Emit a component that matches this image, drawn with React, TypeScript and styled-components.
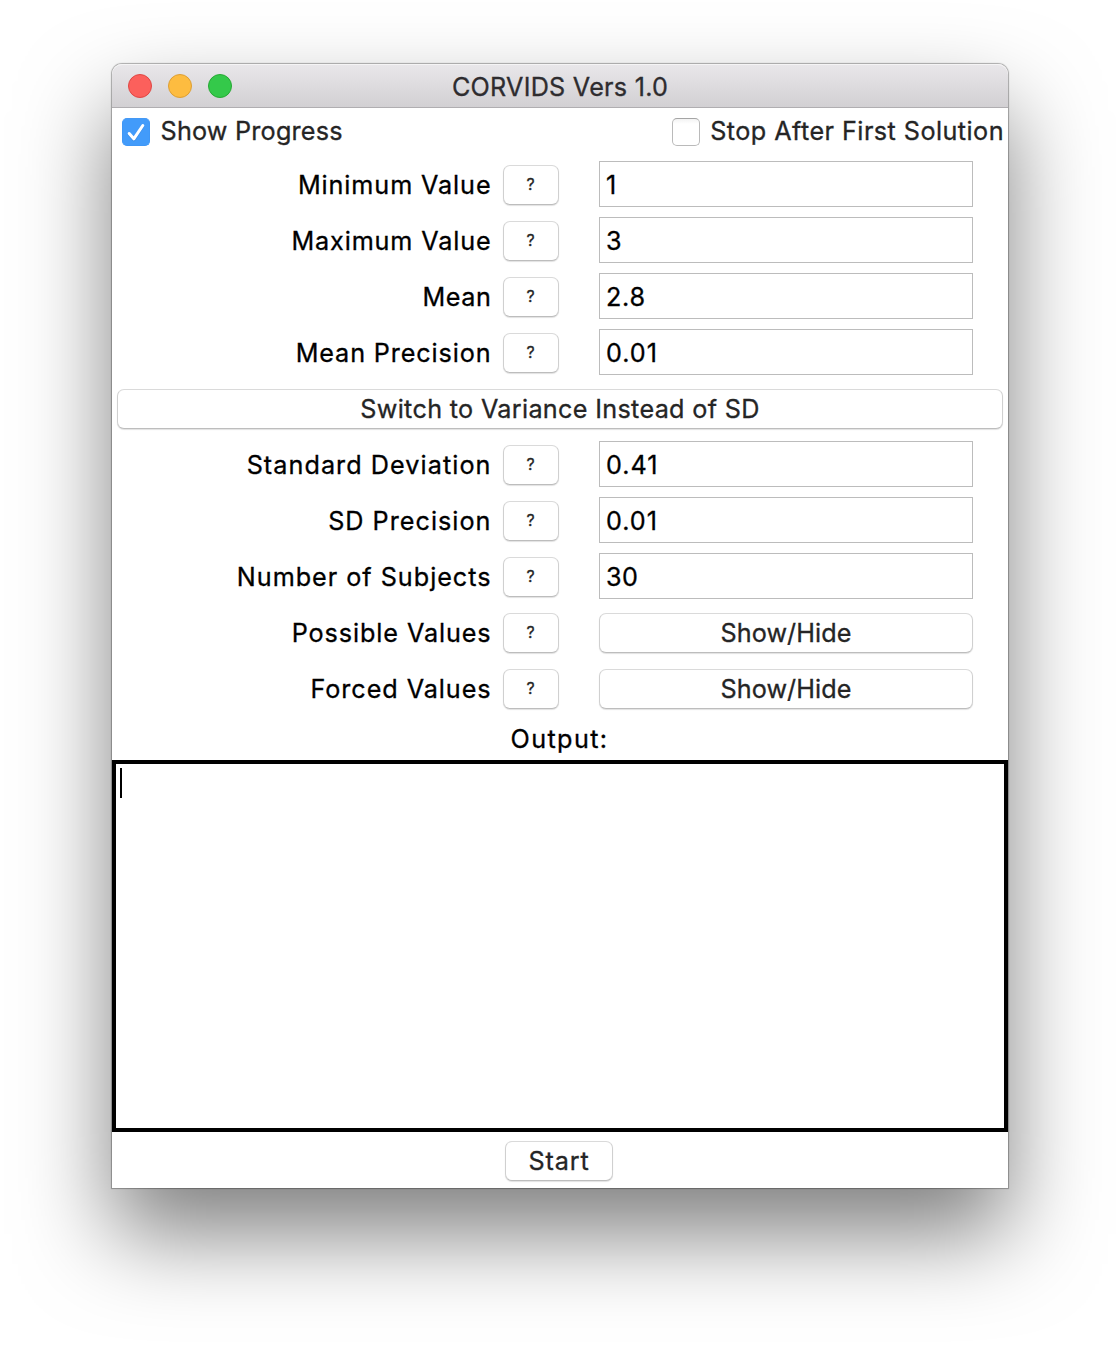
import React from 'react';
import styled, { createGlobalStyle } from 'styled-components';

const GlobalStyle = createGlobalStyle`
  * { box-sizing: border-box; }
  body { margin: 0; background: #fff; }
`;

const Desktop = styled.main`
  height: 1348px;
  padding: 64px 112px;
  overflow: hidden;
  background: #fff;
  font: 400 25.2px/30px Inter, "Liberation Sans", sans-serif;
  color: #000;
  -webkit-text-stroke: 0.3px;
`;

const Window = styled.section`
  display: flex;
  flex-direction: column;
  height: 1124px;
  background: #fff;
  border-radius: 10px 10px 0 0;
  box-shadow: 0 0 1px 1px rgba(0, 0, 0, 0.3), 0 46px 90px rgba(0, 0, 0, 0.5);
`;

const TitleBar = styled.header`
  display: grid;
  grid-template-columns: 1fr auto 1fr;
  align-items: center;
  height: 44px;
  padding: 0 16px;
  background: linear-gradient(#e9e7ea, #d2d0d3);
  border-bottom: 1px solid #b0aeb1;
  border-radius: 10px 10px 0 0;
  box-shadow: inset 0 1px 0 #f5f4f5;
`;

const Lights = styled.div`
  display: flex;
  gap: 16px;
  padding-top: 1px;
`;

const Light = styled.span<{ $fill: string; $rim: string }>`
  width: 24px;
  height: 24px;
  border-radius: 50%;
  background: ${(p) => p.$fill};
  border: 1px solid ${(p) => p.$rim};
`;

const Text = styled.span<{ $track?: number }>`
  white-space: pre;
  letter-spacing: ${(p) => p.$track ?? 0}px;
`;

const Title = styled(Text)`
  padding-top: 2px;
  color: #2e2c2f;
`;

const Options = styled.div`
  display: flex;
  justify-content: space-between;
  height: 48px;
  padding: 8px 4px 0 10px;
  color: #252525;
`;

const Option = styled.label`
  display: flex;
  gap: 10.5px;
`;

const Box = styled.span<{ $on?: boolean }>`
  display: flex;
  width: 28px;
  height: 28px;
  margin-top: 2px;
  border-radius: 5px;
  border: 1px solid ${(p) => (p.$on ? '#3f97f6' : '#bababa')};
  border-top-color: ${(p) => (p.$on ? '#4599f5' : '#a5a5a5')};
  background: ${(p) => (p.$on ? '#429bfa' : 'linear-gradient(#f3f3f3, #fff 5px)')};
`;

const Row = styled.div`
  display: grid;
  grid-template-columns: 379.5px 56px 374px;
  column-gap: 11.5px;
  align-items: center;
  height: 56px;

  > :last-child { margin-left: 28.5px; width: 374px; }
`;

const Label = styled(Text)`
  padding-top: 2px;
  text-align: right;
`;

const Button = styled.button`
  display: flex;
  align-items: center;
  justify-content: center;
  width: 100%;
  height: 40px;
  margin: 2px 0 0;
  padding: 0;
  font: inherit;
  color: #252525;
  background: #fff;
  border: 1px solid #d0d0d0;
  border-top-color: #dadada;
  border-bottom-color: #bdbdbd;
  border-radius: 7px;
  box-shadow: 0 1px 1px rgba(0, 0, 0, 0.12);
`;

const HelpButton = styled(Button)`
  padding: 0 1px 2px 0;
  font-size: 16px;
`;

const Field = styled.input<{ $track: number }>`
  height: 46px;
  padding: 2px 6px 0;
  font: inherit;
  letter-spacing: ${(p) => p.$track}px;
  color: #000;
  background: #fff;
  border: 1px solid #bcbcbc;
  border-radius: 0;
  outline: none;
`;

const SwitchRow = styled.div`
  display: flex;
  align-items: center;
  height: 56px;
  padding: 0 5px;
`;

const OutputHeading = styled.div`
  display: flex;
  justify-content: center;
  height: 44px;
  padding: 8px 1px 0 0;
`;

const OutputArea = styled.div`
  height: 372px;
  padding: 4px;
  border: 4px solid #000;
  background: #fff;
`;

const Caret = styled.span`
  display: block;
  width: 2px;
  height: 30px;
  background: #000;
`;

const Footer = styled.footer`
  display: flex;
  align-items: center;
  height: 56px;
  padding-left: 393px;
`;

const StartButton = styled(Button)`
  width: 108px;
`;

type RowData = { label: string; track: number; value?: string; valueTrack?: number };

const meanRows: RowData[] = [
  { label: 'Minimum Value', track: 0.9, value: '1', valueTrack: 0 },
  { label: 'Maximum Value', track: 0.87, value: '3', valueTrack: 0 },
  { label: 'Mean', track: 0.6, value: '2.8', valueTrack: 0.72 },
  { label: 'Mean Precision', track: 0.88, value: '0.01', valueTrack: 1 },
];

const spreadRows: RowData[] = [
  { label: 'Standard Deviation', track: 1.06, value: '0.41', valueTrack: 1 },
  { label: 'SD Precision', track: 1.02, value: '0.01', valueTrack: 1 },
  { label: 'Number of Subjects', track: 0.98, value: '30', valueTrack: 0.44 },
  { label: 'Possible Values', track: 0.9 },
  { label: 'Forced Values', track: 0.94 },
];

function FormRow({ label, track, value, valueTrack = 0 }: RowData) {
  return (
    <Row>
      <Label $track={track}>{label}</Label>
      <HelpButton>?</HelpButton>
      {value !== undefined ? (
        <Field $track={valueTrack} defaultValue={value} aria-label={label} />
      ) : (
        <Button>
          <Text $track={0.08}>Show/Hide</Text>
        </Button>
      )}
    </Row>
  );
}

export default function App() {
  return (
    <Desktop>
      <GlobalStyle />
      <Window>
        <TitleBar>
          <Lights>
            <Light $fill="#fc605c" $rim="#df4744" />
            <Light $fill="#fdbc40" $rim="#dd9f34" />
            <Light $fill="#34c94a" $rim="#27a934" />
          </Lights>
          <Title $track={0.24}>CORVIDS Vers 1.0</Title>
        </TitleBar>
        <Options>
          <Option>
            <Box $on>
              <svg width="26" height="26" viewBox="0 0 26 26" fill="none">
                <path d="M6.2 14.5 L10.8 19.8 L19.8 6.5" stroke="#2f7fd8" strokeOpacity=".5" strokeWidth="3" strokeLinecap="round" strokeLinejoin="round" transform="translate(0 1)" />
                <path d="M6.2 14.5 L10.8 19.8 L19.8 6.5" stroke="#fff" strokeWidth="3" strokeLinecap="round" strokeLinejoin="round" />
              </svg>
            </Box>
            <Text $track={0.22}>Show Progress</Text>
          </Option>
          <Option>
            <Box />
            <Text $track={0.45}>Stop After First Solution</Text>
          </Option>
        </Options>
        {meanRows.map((row) => (
          <FormRow key={row.label} {...row} />
        ))}
        <SwitchRow>
          <Button>
            <Text $track={0.32}>Switch to Variance Instead of SD</Text>
          </Button>
        </SwitchRow>
        {spreadRows.map((row) => (
          <FormRow key={row.label} {...row} />
        ))}
        <OutputHeading>
          <Text $track={1.4}>Output:</Text>
        </OutputHeading>
        <OutputArea>
          <Caret />
        </OutputArea>
        <Footer>
          <StartButton>
            <Text $track={0.86}>Start</Text>
          </StartButton>
        </Footer>
      </Window>
    </Desktop>
  );
}
